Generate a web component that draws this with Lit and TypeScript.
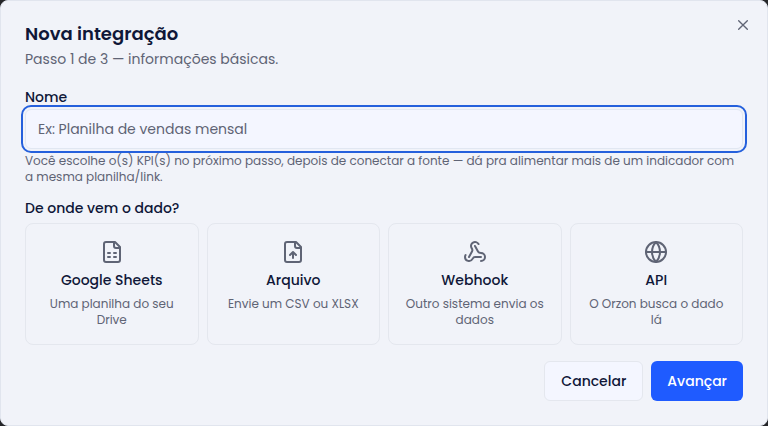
import { LitElement, html, css, svg, SVGTemplateResult } from "lit";
import { customElement } from "lit/decorators.js";

interface Source {
  id: string;
  title: string;
  description: string;
  icon: SVGTemplateResult;
}

const fileOutline = svg`
  <path d="M15 2H6a2 2 0 0 0-2 2v16a2 2 0 0 0 2 2h12a2 2 0 0 0 2-2V7Z" />
  <path d="M14 2v4a2 2 0 0 0 2 2h4" />`;

const sources: Source[] = [
  {
    id: "sheets",
    title: "Google Sheets",
    description: "Uma planilha do seu Drive",
    icon: svg`${fileOutline}<path d="M8 13h2M14 13h2M8 17h2M14 17h2" />`,
  },
  {
    id: "file",
    title: "Arquivo",
    description: "Envie um CSV ou XLSX",
    icon: svg`${fileOutline}<path d="M12 12v6M15 15l-3-3-3 3" />`,
  },
  {
    id: "webhook",
    title: "Webhook",
    description: "Outro sistema envia os dados",
    icon: svg`
      <path d="M18 16.98h-5.99c-1.1 0-1.95.94-2.48 1.9A4 4 0 0 1 2 17c.01-.7.2-1.4.57-2" />
      <path d="m6 17 3.13-5.78c.53-.97.1-2.18-.5-3.1a4 4 0 1 1 6.89-4.06" />
      <path d="m12 6 3.13 5.73C15.66 12.7 16.9 13 18 13a4 4 0 0 1 0 8" />`,
  },
  {
    id: "api",
    title: "API",
    description: "O Orzon busca o dado lá",
    icon: svg`
      <circle cx="12" cy="12" r="10" />
      <path d="M12 2a14.5 14.5 0 0 0 0 20 14.5 14.5 0 0 0 0-20M2 12h20" />`,
  },
];

@customElement("app-root")
export class AppRoot extends LitElement {
  static styles = css`
    :host {
      display: block;
      min-height: 100vh;
      background: #252629;
      color: #0f1738;
      font-family: "Poppins", "Inter", sans-serif;
      font-size: 14px;
      line-height: 20px;
    }
    * {
      box-sizing: border-box;
    }
    .dialog {
      position: relative;
      display: flex;
      flex-direction: column;
      gap: 16px;
      padding: 24px;
      border: 1px solid #e1e5ee;
      border-radius: 8px;
      background: #f1f3f9;
    }
    .header {
      display: flex;
      flex-direction: column;
      gap: 6px;
    }
    h2,
    p {
      margin: 0;
    }
    h2 {
      font-size: 18px;
      line-height: 18px;
      font-weight: 600;
    }
    .muted {
      color: #5f6475;
    }
    .subtitle {
      font-size: 14px;
    }
    .small {
      font-size: 12px;
      line-height: 16px;
    }
    button,
    input {
      font: inherit;
      color: inherit;
    }
    button {
      cursor: pointer;
    }
    .close {
      position: absolute;
      top: 16px;
      right: 16px;
      display: flex;
      padding: 0;
      border: 0;
      background: none;
      color: #5f6475;
    }
    svg {
      fill: none;
      stroke: currentColor;
      stroke-width: 2;
      stroke-linecap: round;
      stroke-linejoin: round;
    }
    .field {
      display: flex;
      flex-direction: column;
    }
    .label {
      font-weight: 500;
      line-height: 24px;
    }
    .text-input {
      width: 100%;
      height: 40px;
      margin-bottom: 4px;
      padding: 8px 12px;
      border: 1px solid #e1e7f2;
      border-radius: 6px;
      background: #f4f6ff;
      outline: 2px solid #2560dc;
      outline-offset: 2px;
    }
    .text-input::placeholder {
      color: #5f6475;
      opacity: 1;
    }
    .sources {
      display: flex;
      flex-direction: column;
      gap: 8px;
      min-width: 0;
    }
    .legend {
      font-weight: 500;
      line-height: 14px;
    }
    .grid {
      display: grid;
      grid-template-columns: repeat(4, minmax(0, 1fr));
      gap: 8px;
    }
    .card {
      display: flex;
      flex-direction: column;
      align-items: center;
      gap: 6px;
      padding: 16px;
      border: 1px solid #e4e7ee;
      border-radius: 8px;
      background: none;
      text-align: center;
    }
    .card-title {
      font-weight: 500;
    }
    .footer {
      display: flex;
      justify-content: flex-end;
      gap: 8px;
    }
    .button {
      height: 40px;
      padding: 0 16px;
      border: 1px solid #e4e7ee;
      border-radius: 6px;
      background: #f4f6ff;
      font-weight: 500;
    }
    .primary {
      border: 0;
      background: #1f5bff;
      color: #ffffff;
    }
  `;

  render() {
    return html`
      <section class="dialog" role="dialog" aria-labelledby="title">
        <header class="header">
          <h2 id="title">Nova integração</h2>
          <p class="subtitle muted">Passo 1 de 3 — informações básicas.</p>
        </header>
        <button class="close" type="button" aria-label="Fechar">
          <svg width="16" height="16" viewBox="0 0 24 24"><path d="M18.5 5.5l-13 13M5.5 5.5l13 13" /></svg>
        </button>
        <div class="field">
          <label class="label" for="name">Nome</label>
          <input class="text-input" id="name" type="text" placeholder="Ex: Planilha de vendas mensal" />
          <p class="small muted">
            Você escolhe o(s) KPI(s) no próximo passo, depois de conectar a fonte — dá pra alimentar mais de um
            indicador com a mesma planilha/link.
          </p>
        </div>
        <div class="sources" role="group" aria-labelledby="source-label">
          <span class="legend" id="source-label">De onde vem o dado?</span>
          <div class="grid">
            ${sources.map(
              (source) => html`
                <button class="card" type="button" data-source=${source.id}>
                  <svg class="muted" width="24" height="24" viewBox="0 0 24 24">${source.icon}</svg>
                  <span class="card-title">${source.title}</span>
                  <span class="small muted">${source.description}</span>
                </button>
              `,
            )}
          </div>
        </div>
        <footer class="footer">
          <button class="button cancel" type="button">Cancelar</button>
          <button class="button primary" type="button">Avançar</button>
        </footer>
      </section>
    `;
  }
}
